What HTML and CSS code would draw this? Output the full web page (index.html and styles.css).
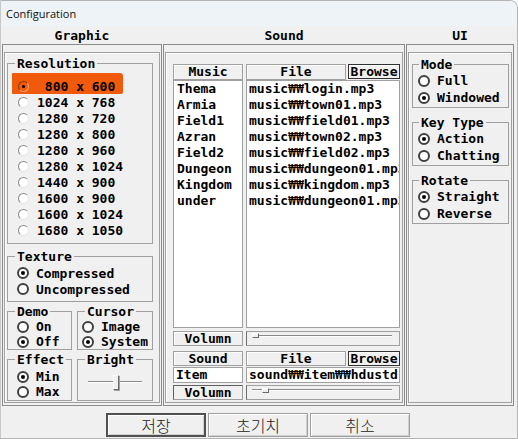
FILE: index.html
```html
<!DOCTYPE html>
<html>
<head>
<meta charset="utf-8">
<title>Configuration</title>
<link rel="stylesheet" href="styles.css">
</head>
<body>
<div class="window">
  <div class="titlebar">Configuration</div>
  <div class="client">
    <div class="heads">
      <div class="head w-graphic">Graphic</div>
      <div class="head w-sound">Sound</div>
      <div class="head w-ui">UI</div>
    </div>
    <div class="panels">
      <div class="panel w-graphic">
        <div class="frame f-graphic">
          <fieldset class="group g-res">
            <legend>Resolution</legend>
            <div class="opt sel"><span class="hl"></span><span class="radio light on"></span><span class="txt"> 800 x 600</span></div>
            <div class="opt"><span class="radio light"></span><span class="txt">1024 x 768</span></div>
            <div class="opt"><span class="radio light"></span><span class="txt">1280 x 720</span></div>
            <div class="opt"><span class="radio light"></span><span class="txt">1280 x 800</span></div>
            <div class="opt"><span class="radio light"></span><span class="txt">1280 x 960</span></div>
            <div class="opt"><span class="radio light"></span><span class="txt">1280 x 1024</span></div>
            <div class="opt"><span class="radio light"></span><span class="txt">1440 x 900</span></div>
            <div class="opt"><span class="radio light"></span><span class="txt">1600 x 900</span></div>
            <div class="opt"><span class="radio light"></span><span class="txt">1600 x 1024</span></div>
            <div class="opt"><span class="radio light"></span><span class="txt">1680 x 1050</span></div>
          </fieldset>
          <fieldset class="group g-tex">
            <legend>Texture</legend>
            <div class="opt"><span class="radio on"></span><span class="txt">Compressed</span></div>
            <div class="opt"><span class="radio"></span><span class="txt">Uncompressed</span></div>
          </fieldset>
          <div class="pair pair1">
            <fieldset class="group g-demo">
              <legend>Demo</legend>
              <div class="opt o15"><span class="radio"></span><span class="txt">On</span></div>
              <div class="opt o15"><span class="radio on"></span><span class="txt">Off</span></div>
            </fieldset>
            <fieldset class="group g-cursor">
              <legend>Cursor</legend>
              <div class="opt o15"><span class="radio"></span><span class="txt">Image</span></div>
              <div class="opt o15"><span class="radio on"></span><span class="txt">System</span></div>
            </fieldset>
          </div>
          <div class="pair pair2">
            <fieldset class="group g-effect">
              <legend>Effect</legend>
              <div class="opt o15"><span class="radio on"></span><span class="txt">Min</span></div>
              <div class="opt o15"><span class="radio"></span><span class="txt">Max</span></div>
            </fieldset>
            <fieldset class="group g-bright">
              <legend>Bright</legend>
              <div class="bslider"><span class="btrack"></span><span class="bthumb"></span></div>
            </fieldset>
          </div>
        </div>
      </div>

      <div class="panel w-sound">
        <div class="frame f-sound">
          <div class="srow r-head">
            <div class="c1 hcell">Music</div>
            <div class="c2 split"><div class="hcell grow">File</div><div class="browse">Browse</div></div>
          </div>
          <div class="srow r-list">
            <div class="c1 list">
              <div class="item">Thema</div>
              <div class="item">Armia</div>
              <div class="item">Field1</div>
              <div class="item">Azran</div>
              <div class="item">Field2</div>
              <div class="item">Dungeon</div>
              <div class="item">Kingdom</div>
              <div class="item">under</div>
            </div>
            <div class="c2 list files">
              <div class="item">music₩₩login.mp3</div>
              <div class="item">music₩₩town01.mp3</div>
              <div class="item">music₩₩field01.mp3</div>
              <div class="item">music₩₩town02.mp3</div>
              <div class="item">music₩₩field02.mp3</div>
              <div class="item">music₩₩dungeon01.mp3</div>
              <div class="item">music₩₩kingdom.mp3</div>
              <div class="item">music₩₩dungeon01.mp3</div>
            </div>
          </div>
          <div class="srow r-vol1">
            <div class="c1 hcell">Volumn</div>
            <div class="c2 slider"><span class="track"></span><span class="thumb t1"></span></div>
          </div>
          <div class="srow r-shead">
            <div class="c1 hcell">Sound</div>
            <div class="c2 split"><div class="hcell grow">File</div><div class="browse">Browse</div></div>
          </div>
          <div class="srow r-item">
            <div class="c1 wcell">Item</div>
            <div class="c2 wcell">sound₩₩item₩₩hdustdrop.wav</div>
          </div>
          <div class="srow r-vol2">
            <div class="c1 hcell pressed">Volumn</div>
            <div class="c2 slider"><span class="track"></span><span class="thumb t2"></span></div>
          </div>
        </div>
      </div>

      <div class="panel w-ui">
        <div class="frame f-ui">
          <fieldset class="group g-ui">
            <legend>Mode</legend>
            <div class="opt o17"><span class="radio"></span><span class="txt">Full</span></div>
            <div class="opt o17"><span class="radio on"></span><span class="txt">Windowed</span></div>
          </fieldset>
          <fieldset class="group g-ui g-next">
            <legend>Key Type</legend>
            <div class="opt o17"><span class="radio on"></span><span class="txt">Action</span></div>
            <div class="opt o17"><span class="radio"></span><span class="txt">Chatting</span></div>
          </fieldset>
          <fieldset class="group g-ui g-next">
            <legend>Rotate</legend>
            <div class="opt o17"><span class="radio on"></span><span class="txt">Straight</span></div>
            <div class="opt o17"><span class="radio"></span><span class="txt">Reverse</span></div>
          </fieldset>
        </div>
      </div>
    </div>
    <div class="buttons">
      <button class="btn default">저장</button>
      <button class="btn">초기치</button>
      <button class="btn">취소</button>
    </div>
  </div>
</div>
</body>
</html>
```

FILE: styles.css
```css
html, body {
  margin: 0;
  padding: 0;
  background: #ffffff;
}
body {
  width: 518px;
  height: 439px;
  overflow: hidden;
  font-family: "DejaVu Sans Mono", "Liberation Mono", monospace;
  font-weight: bold;
  font-size: 13px;
  color: #000;
}
.window {
  box-sizing: border-box;
  width: 518px;
  height: 439px;
  background: #f0f0f0;
  border: 1px solid #b4b4b4;
  border-left-color: #c8c8c8;
  border-top-right-radius: 8px;
  overflow: hidden;
  display: flex;
  flex-direction: column;
}
.titlebar {
  flex: none;
  height: 25px;
  line-height: 25px;
  background: #eef3f8;
  padding-left: 5px;
  font-family: "Open Sans", "Noto Sans", sans-serif;
  font-weight: normal;
  font-size: 11px;
  color: #111;
}
.client {
  flex: 1;
  padding: 0 3px 0 1px;
  display: flex;
  flex-direction: column;
}
.heads {
  display: flex;
  gap: 1px;
  height: 18px;
  line-height: 19px;
}
.head { text-align: center; }
.w-graphic { width: 160px; }
.w-sound { width: 242px; }
.w-ui { width: 108px; }

.panels {
  display: flex;
  gap: 1px;
  height: 362px;
}
.panel {
  box-sizing: border-box;
  border: 1px solid #8c8c8c;
  padding: 7px 1px 2px 1px;
  display: flex;
  flex-direction: column;
}
.frame {
  flex: 1;
  border: 1px solid #a0a0a0;
  box-shadow: inset 1px 1px 0 #ffffff;
  display: flex;
  flex-direction: column;
  min-height: 0;
}

/* group boxes */
.group {
  margin: 0;
  padding: 0;
  border: 1px solid #a0a0a0;
  min-width: 0;
}
.group legend {
  padding: 0 2px;
  margin-left: 0;
  height: 13px;
  line-height: 13px;
}
.opt {
  display: flex;
  align-items: center;
  height: 16px;
  white-space: pre;
  position: relative;
}
.opt.o15 { height: 15px; }
.opt.o17 { height: 17px; }
.txt { position: relative; }

.radio {
  display: inline-block;
  box-sizing: border-box;
  flex: none;
  width: 12px;
  height: 12px;
  border-radius: 50%;
  border: 2px solid #404040;
  background: #ffffff;
  position: relative;
  margin-right: 7px;
}
.radio.on::after {
  content: "";
  position: absolute;
  left: 2px;
  top: 2px;
  width: 4px;
  height: 4px;
  border-radius: 50%;
  background: #000;
}
.radio.light {
  width: 11px;
  height: 11px;
  border: 1px solid;
  border-color: #8a8a8a #e6e6e6 #e6e6e6 #8a8a8a;
  margin-right: 8px;
}
.radio.light.on::after {
  left: 3px;
  top: 3px;
  width: 3px;
  height: 3px;
}
.sel .radio.light {
  background: transparent;
  border-color: #8a3a10 #f7a070 #f7a070 #8a3a10;
}
.hl {
  position: absolute;
  left: -6px;
  top: -5px;
  width: 111px;
  height: 21px;
  background: #f05a0a;
  border-radius: 1px 3px 2px 1px;
}

/* graphic column */
.f-graphic { padding: 4px 6px 0 2px; }
.g-res { padding: 8px 0 5px 10px; }
.g-res legend { margin-left: -3px; }
.g-tex { margin-top: 6px; padding: 2px 0 4px 9px; }
.g-tex legend { margin-left: -2px; }
.pair { display: flex; gap: 5px; margin-top: 3px; }
.g-demo { width: 65px; box-sizing: border-box; padding: 1px 0 0 9px; }
.g-demo legend { margin-left: -2px; }
.g-cursor { flex: 1; padding: 1px 0 0 4px; }
.g-cursor legend { margin-left: 3px; }
.g-effect { width: 65px; box-sizing: border-box; padding: 3px 0 1px 9px; }
.g-effect legend { margin-left: -2px; }
.g-bright { flex: 1; padding: 8px 0 1px 0; }
.g-bright legend { margin-left: 7px; }
.bslider {
  position: relative;
  width: 54px;
  height: 16px;
  margin: 0 auto;
}
.btrack {
  position: absolute;
  left: 0;
  right: 0;
  top: 7px;
  height: 0;
  border-top: 1px solid #8a8a8a;
  border-bottom: 1px solid #ffffff;
}
.bthumb {
  position: absolute;
  left: 25px;
  top: 1px;
  width: 6px;
  height: 15px;
  box-sizing: border-box;
  background: #f0f0f0;
  border: 1px solid;
  border-color: #ffffff #6a6a6a #6a6a6a #ffffff;
  box-shadow: 1px 1px 0 #a0a0a0;
}

/* sound column */
.f-sound { padding: 11px 2px 0 7px; }
.srow { display: flex; gap: 3px; }
.c1 { width: 70px; flex: none; box-sizing: border-box; }
.c2 { width: 154px; flex: none; box-sizing: border-box; }
.hcell {
  box-sizing: border-box;
  height: 16px;
  line-height: 14px;
  text-align: center;
  border: 1px solid #a0a0a0;
  box-shadow: inset 1px 1px 0 #ffffff;
  background: #f0f0f0;
}
.split { display: flex; gap: 2px; }
.grow { flex: 1; }
.browse {
  box-sizing: border-box;
  width: 52px;
  height: 15px;
  line-height: 13px;
  text-align: center;
  border: 1px solid #303030;
  box-shadow: inset 1px 1px 0 #ffffff;
  background: #f0f0f0;
}
.list {
  height: 248px;
  border: 1px solid #a0a0a0;
  background: #ffffff;
  overflow: hidden;
  padding-left: 3px;
}
.list.files { padding-left: 2px; }
.item { height: 16px; line-height: 16px; white-space: nowrap; }
.r-vol1 { margin-top: 3px; }
.r-vol1 .hcell, .r-vol2 .hcell, .r-shead .hcell { height: 15px; line-height: 13px; }
.slider {
  position: relative;
  height: 15px;
  border: 1px solid #a0a0a0;
  border-left-color: #707070;
}
.track {
  position: absolute;
  left: 5px;
  right: 7px;
  top: 3px;
  height: 0;
  border-top: 1px solid #8a8a8a;
  border-bottom: 1px solid #ffffff;
}
.thumb {
  position: absolute;
  top: 1px;
  width: 7px;
  height: 5px;
  box-sizing: border-box;
  border: 1px solid;
  border-color: #ffffff #6a6a6a #6a6a6a #ffffff;
  background: #f0f0f0;
}
.t1 { left: 5px; }
.t2 { left: 15px; top: 2px; }
.r-shead { margin-top: 5px; }
.r-shead .browse { height: 15px; }
.r-item { margin-top: 1px; }
.wcell {
  height: 16px;
  line-height: 14px;
  border: 1px solid #a0a0a0;
  background: #ffffff;
  padding-left: 2px;
  white-space: nowrap;
  overflow: hidden;
}
.r-vol2 { margin-top: 2px; }
.hcell.pressed {
  border-color: #606060 #a0a0a0 #a0a0a0 #606060;
  box-shadow: none;
}

/* ui column */
.f-ui { padding: 5px 2px 0 3px; }
.g-ui { padding: 1px 0 1px 5px; }
.g-ui legend { margin-left: 1px; }
.g-next { margin-top: 8px; }

/* buttons */
.buttons {
  display: flex;
  justify-content: center;
  gap: 2px;
  margin-top: 7px;
}
.btn {
  box-sizing: border-box;
  width: 100px;
  height: 24px;
  margin: 0;
  padding: 0;
  background: #f0f0f0;
  border: 1px solid #a0a0a0;
  box-shadow: inset 1px 1px 0 #ffffff, inset -1px -1px 0 #d0d0d0;
  font-family: "Noto Sans CJK KR", sans-serif;
  font-weight: 300;
  font-size: 16px;
  line-height: 20px;
  color: #222;
}
.btn.default {
  border: 2px solid #505050;
}
```
